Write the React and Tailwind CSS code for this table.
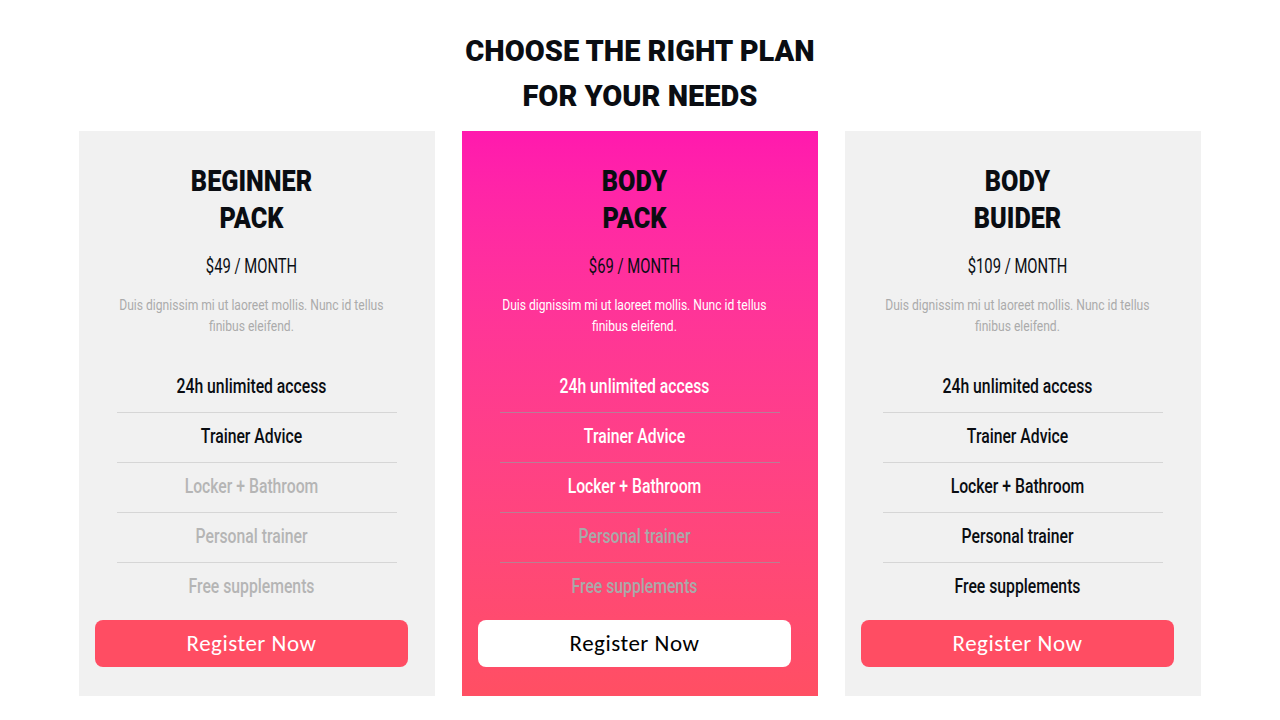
const plans = [
  {
    title: ['BEGINNER', 'PACK'],
    price: '$49 / MONTH',
    active: 2,
    featured: false,
  },
  {
    title: ['BODY', 'PACK'],
    price: '$69 / MONTH',
    active: 3,
    featured: true,
  },
  {
    title: ['BODY', 'BUIDER'],
    price: '$109 / MONTH',
    active: 5,
    featured: false,
  },
]

const features = ['24h unlimited access', 'Trainer Advice', 'Locker + Bathroom', 'Personal trainer', 'Free supplements']

const display = "font-['Roboto',sans-serif]"

function PlanCard({ plan }) {
  const { featured } = plan
  return (
    <div
      className={`flex w-[356px] flex-col pt-8 pb-[29px] pl-4 pr-[27px] ${
        featured ? 'bg-gradient-to-b from-[#ff19ae] to-[#ff4f63]' : 'bg-[#f1f1f1]'
      }`}
    >
      <h2
        className={`${display} scale-x-[0.87] text-center text-[29px] font-black leading-[37px] text-[#0a0d12]`}
      >
        {plan.title[0]}
        <br />
        {plan.title[1]}
      </h2>
      <p
        className={`${display} mt-[15px] scale-x-[0.74] text-center text-[20px] leading-[28px] text-[#0a0d12]`}
      >
        {plan.price}
      </p>
      <p
        className={`${display} mt-[15px] w-max self-center scale-x-[0.78] whitespace-nowrap text-center text-[15.5px] leading-[21px] ${
          featured ? 'text-white' : 'text-[#ababab]'
        }`}
      >
        Duis dignissim mi ut laoreet mollis. Nunc id tellus
        <br />
        finibus eleifend.
      </p>
      <ul className="mt-[26px] ml-[22px] w-[280px]">
        {features.map((f, i) => {
          const on = i < plan.active
          const color = on ? (featured ? 'text-white' : 'text-[#0a0d12]') : featured ? 'text-[#a9a9a9]' : 'text-[#b5b5b5]'
          const border =
            i < features.length - 1 ? (featured ? 'border-b border-[#9c979c]/70' : 'border-b border-[#d6d6d6]') : ''
          return (
            <li key={f} className={`h-[50px] pt-[11px] pr-[11px] ${border}`}>
              <span
                className={`${display} block scale-x-[0.75] text-center text-[21px] font-medium leading-[24px] ${color}`}
              >
                {f}
              </span>
            </li>
          )
        })}
      </ul>
      <button
        className={`mt-[7px] h-[47px] w-[313px] rounded-lg font-['Carlito','Lato',sans-serif] text-[23px] tracking-[0.5px] ${
          featured ? 'bg-white text-black' : 'bg-[#ff4d63] text-white'
        }`}
      >
        Register Now
      </button>
    </div>
  )
}

export default function App() {
  return (
    <div className="flex h-[720px] w-[1280px] flex-col items-center bg-white pt-[29px]">
      <h1 className={`${display} text-center text-[29px] font-black leading-[45px] text-[#0a0d12]`}>
        CHOOSE THE RIGHT PLAN
        <br />
        FOR YOUR NEEDS
      </h1>
      <div className="mt-[12px] flex gap-[27px]">
        {plans.map((p) => (
          <PlanCard key={p.price} plan={p} />
        ))}
      </div>
    </div>
  )
}
